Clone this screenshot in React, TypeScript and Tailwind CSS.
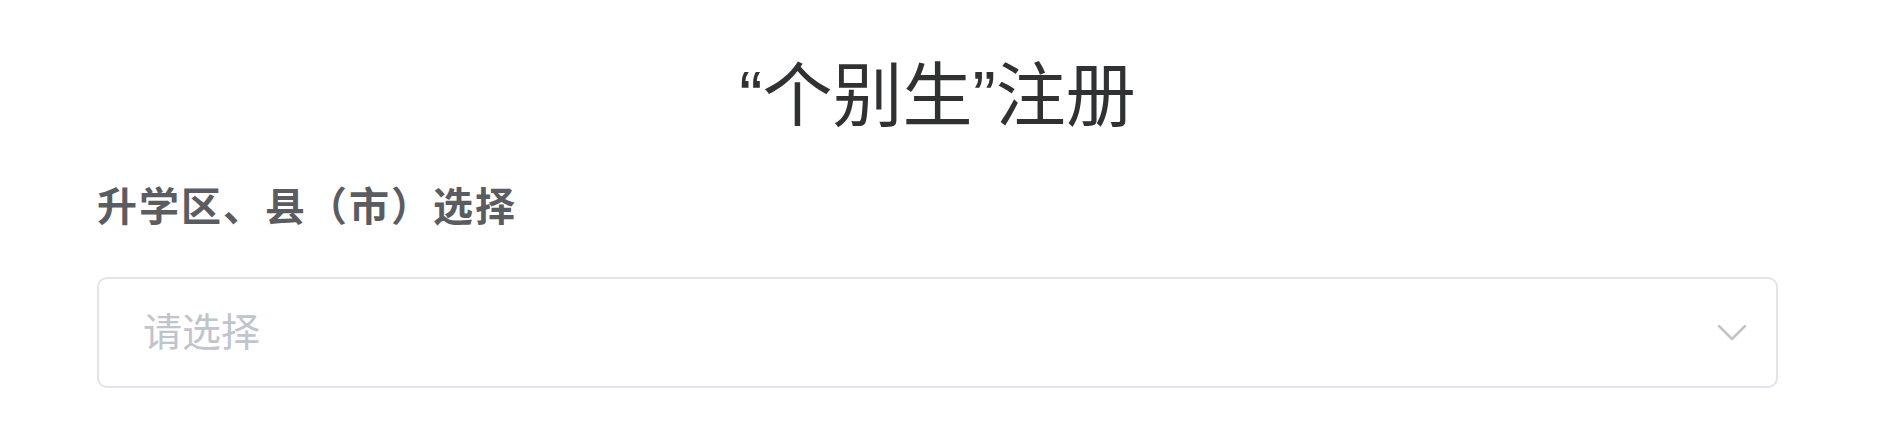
import React from 'react';

const ChevronDown: React.FC = () => (
  <svg width="30" height="17" viewBox="0 0 30 17" fill="none" className="shrink-0">
    <path d="M2 2 L15 15 L28 2" stroke="#c0c4cc" strokeWidth="2.5" strokeLinecap="round" strokeLinejoin="round" />
  </svg>
);

export default function App() {
  return (
    <div className="min-h-[421px] bg-white font-['Liberation_Sans','Noto_Sans_CJK_SC',sans-serif]">
      <div className="ml-[97px] w-[1681px] pt-[46px]">
        {/* 标题 */}
        <h1 className="text-center text-[70px] leading-[102px] font-normal text-[#303133]">
          “个别生”注册
        </h1>

        {/* 选择区县 */}
        <div className="mt-[31px] text-[40px] leading-[56px] font-bold tracking-[2px] text-[#5a5c61]">
          升学区、县（市）选择
        </div>

        <div className="mt-[42px] flex h-[111px] items-center justify-between rounded-[10px] border-2 border-[#e1e4ec] pl-[44px] pr-[29px]">
          <span className="text-[39px] leading-none text-[#c0c4cc]">请选择</span>
          <ChevronDown />
        </div>
      </div>
    </div>
  );
}
